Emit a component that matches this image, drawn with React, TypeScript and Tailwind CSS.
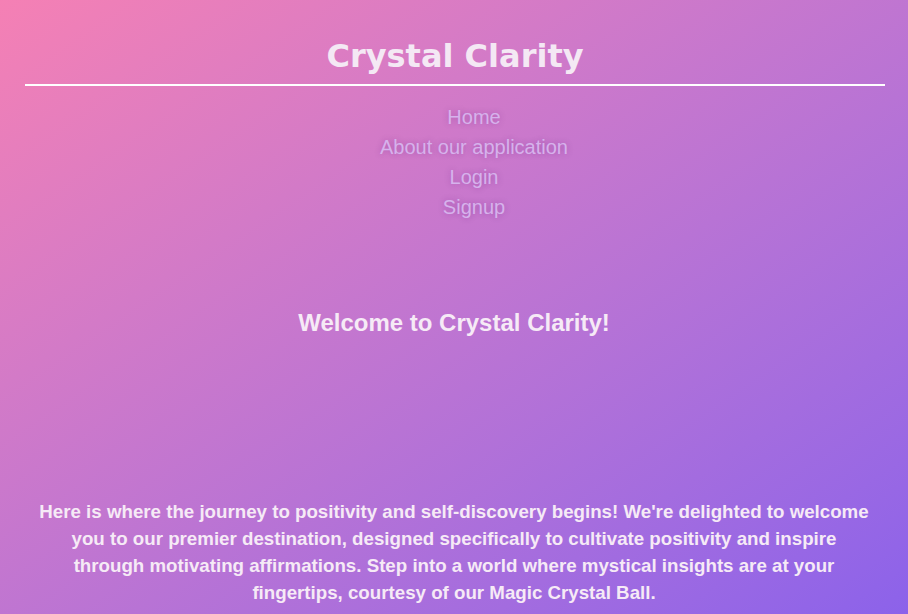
export default function App() {
    const links = ["Home", "About our application", "Login", "Signup"]

    return (
        <div className="min-h-[614px] w-full bg-gradient-to-br from-[#f580b4] to-[#8c62ea] font-['Liberation_Sans',Arial,sans-serif]">
            {/* Header */}
            <header className="pl-[25px] pr-[23px] pt-[36px]">
                <h1 className="text-center text-[32px] leading-[40px] font-bold text-[#f4e8f4] font-['DejaVu_Sans',Verdana,sans-serif]">
                    Crystal Clarity
                </h1>
                <div className="mt-[8px] h-[2px] bg-white" />
            </header>

            {/* Navegação */}
            <nav className="flex flex-col items-center pt-[16px] pl-[40px]">
                {links.map((link) => (
                    <a
                        key={link}
                        href="#"
                        className="text-[20px] leading-[30px] text-[#d6b2ec] [text-shadow:0_0_6px_rgba(90,20,120,0.3)]"
                    >
                        {link}
                    </a>
                ))}
            </nav>

            <main className="flex flex-col items-center px-[38px]">
                <h2 className="mt-[86px] text-[24px] leading-[30px] font-bold text-[#f6eaf6]">
                    Welcome to Crystal Clarity!
                </h2>
                <p className="mt-[160px] text-center text-[18.72px] leading-[27px] font-bold text-[#f6eaf6]">
                    Here is where the journey to positivity and self-discovery begins! We're delighted to welcome you to our premier destination, designed specifically to cultivate positivity and inspire through motivating affirmations. Step into a world where mystical insights are at your fingertips, courtesy of our Magic Crystal Ball.
                </p>
            </main>
        </div>
    )
}
